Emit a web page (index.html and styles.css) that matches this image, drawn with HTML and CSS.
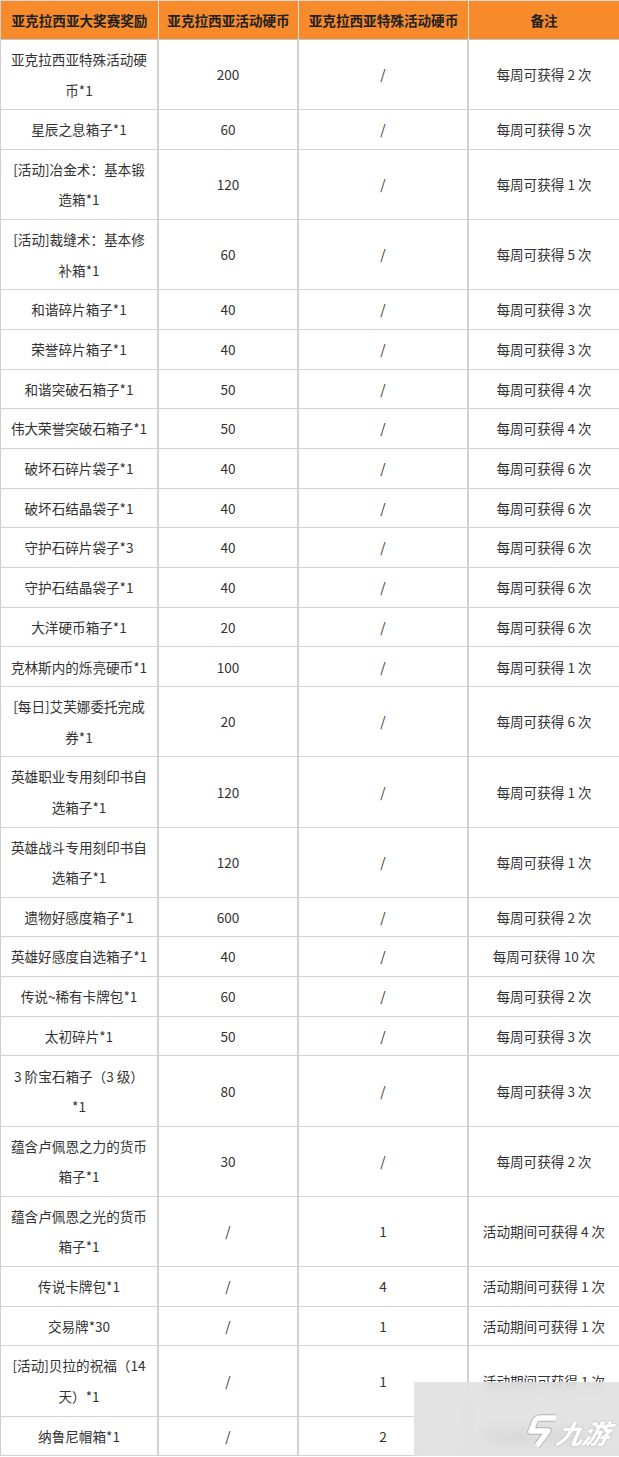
FILE: index.html
```html
<!DOCTYPE html>
<html lang="zh-CN">
<head>
<meta charset="utf-8">
<title>亚克拉西亚大奖赛奖励</title>
<link rel="stylesheet" href="styles.css">
</head>
<body>
<div class="page">
<table class="rewards">
  <colgroup>
    <col class="c1"><col class="c2"><col class="c3"><col class="c4">
  </colgroup>
  <thead>
    <tr><th>亚克拉西亚大奖赛奖励</th><th>亚克拉西亚活动硬币</th><th>亚克拉西亚特殊活动硬币</th><th>备注</th></tr>
  </thead>
  <tbody>
    <tr><td>亚克拉西亚特殊活动硬币*1</td><td>200</td><td>/</td><td>每周可获得 2 次</td></tr>
    <tr><td>星辰之息箱子*1</td><td>60</td><td>/</td><td>每周可获得 5 次</td></tr>
    <tr><td>[活动]冶金术：基本锻造箱*1</td><td>120</td><td>/</td><td>每周可获得 1 次</td></tr>
    <tr><td>[活动]裁缝术：基本修补箱*1</td><td>60</td><td>/</td><td>每周可获得 5 次</td></tr>
    <tr><td>和谐碎片箱子*1</td><td>40</td><td>/</td><td>每周可获得 3 次</td></tr>
    <tr><td>荣誉碎片箱子*1</td><td>40</td><td>/</td><td>每周可获得 3 次</td></tr>
    <tr><td>和谐突破石箱子*1</td><td>50</td><td>/</td><td>每周可获得 4 次</td></tr>
    <tr><td>伟大荣誉突破石箱子*1</td><td>50</td><td>/</td><td>每周可获得 4 次</td></tr>
    <tr><td>破坏石碎片袋子*1</td><td>40</td><td>/</td><td>每周可获得 6 次</td></tr>
    <tr><td>破坏石结晶袋子*1</td><td>40</td><td>/</td><td>每周可获得 6 次</td></tr>
    <tr><td>守护石碎片袋子*3</td><td>40</td><td>/</td><td>每周可获得 6 次</td></tr>
    <tr><td>守护石结晶袋子*1</td><td>40</td><td>/</td><td>每周可获得 6 次</td></tr>
    <tr><td>大洋硬币箱子*1</td><td>20</td><td>/</td><td>每周可获得 6 次</td></tr>
    <tr><td>克林斯内的烁亮硬币*1</td><td>100</td><td>/</td><td>每周可获得 1 次</td></tr>
    <tr><td>[每日]艾芙娜委托完成券*1</td><td>20</td><td>/</td><td>每周可获得 6 次</td></tr>
    <tr><td>英雄职业专用刻印书自选箱子*1</td><td>120</td><td>/</td><td>每周可获得 1 次</td></tr>
    <tr><td>英雄战斗专用刻印书自选箱子*1</td><td>120</td><td>/</td><td>每周可获得 1 次</td></tr>
    <tr><td>遗物好感度箱子*1</td><td>600</td><td>/</td><td>每周可获得 2 次</td></tr>
    <tr><td>英雄好感度自选箱子*1</td><td>40</td><td>/</td><td>每周可获得 10 次</td></tr>
    <tr><td>传说~稀有卡牌包*1</td><td>60</td><td>/</td><td>每周可获得 2 次</td></tr>
    <tr><td>太初碎片*1</td><td>50</td><td>/</td><td>每周可获得 3 次</td></tr>
    <tr><td>3 阶宝石箱子（3 级）*1</td><td>80</td><td>/</td><td>每周可获得 3 次</td></tr>
    <tr><td>蕴含卢佩恩之力的货币箱子*1</td><td>30</td><td>/</td><td>每周可获得 2 次</td></tr>
    <tr><td>蕴含卢佩恩之光的货币箱子*1</td><td>/</td><td>1</td><td>活动期间可获得 4 次</td></tr>
    <tr><td>传说卡牌包*1</td><td>/</td><td>4</td><td>活动期间可获得 1 次</td></tr>
    <tr><td>交易牌*30</td><td>/</td><td>1</td><td>活动期间可获得 1 次</td></tr>
    <tr><td>[活动]贝拉的祝福（14天）*1</td><td>/</td><td>1</td><td>活动期间可获得 1 次</td></tr>
    <tr><td>纳鲁尼帽箱*1</td><td>/</td><td>2</td><td>活动期间可获得 1 次</td></tr>
  </tbody>
</table>

<div class="watermark">
  <div class="frost"></div>
  <div class="brand">
    <svg class="brand-mark" viewBox="0 0 30 34" width="30" height="34" aria-hidden="true">
      <path d="M28 4 L12 4 Q8.5 4 7.5 7.5 L5 17 L22 17 L13 32" fill="none" stroke="#b3b3b3" stroke-width="7.5" stroke-linejoin="round" stroke-linecap="butt"/>
      <path d="M28 4 L12 4 Q8.5 4 7.5 7.5 L5 17 L22 17 L13 32" fill="none" stroke="#ffffff" stroke-width="5.5" stroke-linejoin="round" stroke-linecap="butt"/>
    </svg>
    <span class="brand-text">九游</span>
  </div>
</div>
</div>
</body>
</html>
```

FILE: styles.css
```css
html, body {
  margin: 0;
  padding: 0;
  background: #ffffff;
}

.page {
  position: relative;
  width: 619px;
  font-family: "Noto Sans CJK SC", "Noto Sans", "Liberation Sans", sans-serif;
  color: #333333;
}

.rewards {
  width: 619px;
  table-layout: fixed;
  border-collapse: separate;
  border-spacing: 0;
  border-left: 1px solid #cfcfcf;
  border-top: 1px solid #d6d6d6;
}

.c1 { width: 158px; }
.c2 { width: 140px; }
.c3 { width: 170px; }
.c4 { width: 151px; }

.rewards th {
  background: #f78a2b;
  color: #222222;
  font-size: 13.6px;
  font-weight: 700;
  height: 38px;
  padding: 0 4px;
  text-align: center;
  border-right: 1px solid #e9e2dc;
  border-bottom: 1px solid #b9c3cc;
  white-space: nowrap;
}

.rewards th:last-child {
  border-right: 1px solid #c8c8c8;
}

.rewards td {
  font-size: 13.6px;
  line-height: 30.5px;
  padding: 4.1px 8px;
  text-align: center;
  vertical-align: middle;
  border-right: 2px solid #d2d2d2;
  border-bottom: 1px solid #d2d2d2;
}

.rewards td:last-child {
  border-right: 1px solid #c8c8c8;
}

.watermark {
  position: absolute;
  left: 414px;
  top: 1382px;
  width: 205px;
  height: 78px;
  overflow: hidden;
}

.frost {
  position: absolute;
  inset: 0;
  background: rgba(222, 222, 222, 0.86);
  backdrop-filter: blur(6px);
}

.brand {
  position: absolute;
  left: 112px;
  top: 32px;
  display: flex;
  align-items: flex-end;
  gap: 1px;
}

.brand-mark {
  display: block;
  transform: skewX(-8deg);
}

.brand-text {
  font-family: "Noto Sans CJK SC", sans-serif;
  font-size: 27px;
  font-weight: 900;
  font-style: italic;
  line-height: 30px;
  color: #ffffff;
  transform: skewX(-12deg);
  text-shadow: 0 0 1px #a0a0a0, 0 0 1px #a0a0a0;
  letter-spacing: -1px;
}
```
